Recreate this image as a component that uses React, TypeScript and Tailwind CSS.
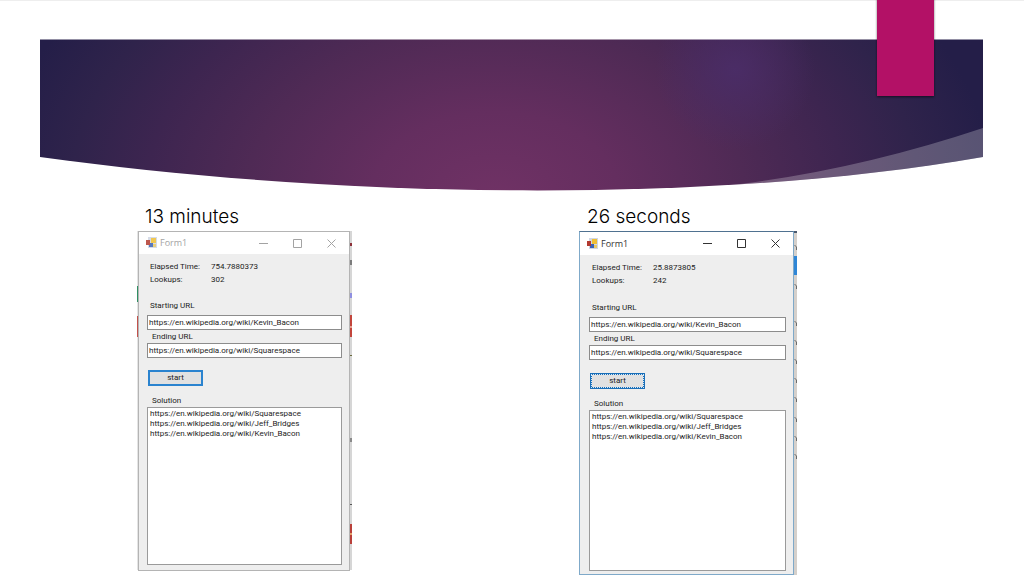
type Run = {
  id: string;
  title: string;
  active: boolean;
  elapsed: string;
  lookups: string;
  styles: {
    figure: string;
    frame: string;
    titleBar: string;
    client: string;
    startGap: string;
    buttonGap: string;
    button: string;
    solution: string;
  };
};

const START_URL = "https://en.wikipedia.org/wiki/Kevin_Bacon";
const END_URL = "https://en.wikipedia.org/wiki/Squarespace";
const SOLUTION = [END_URL, "https://en.wikipedia.org/wiki/Jeff_Bridges", START_URL].join("\n");

const runs: Run[] = [
  {
    id: "slow",
    title: "13 minutes",
    active: false,
    elapsed: "754.7880373",
    lookups: "302",
    styles: {
      figure: "w-[215px]",
      frame: "border-[#b4b4b4]",
      titleBar: "h-[22px] text-[#a3a3a3]",
      client: "pl-2 pb-[5px]",
      startGap: "mt-[13px]",
      buttonGap: "mt-3",
      button: "border-[#2a83cf]",
      solution: "h-[158px]",
    },
  },
  {
    id: "fast",
    title: "26 seconds",
    active: true,
    elapsed: "25.8873805",
    lookups: "242",
    styles: {
      figure: "w-[218px]",
      frame: "border-[#7fa9c9] border-t-[#4f7190]",
      titleBar: "h-[23px] text-[#333333]",
      client: "pl-[9px] pb-[3px]",
      startGap: "mt-[14px]",
      buttonGap: "mt-[13px]",
      button: "border-[#1a6fb8] outline-1 -outline-offset-2 outline-dotted outline-[#dce9f5]",
      solution: "h-[161px]",
    },
  },
];

function Banner() {
  return (
    <svg className="block w-full h-[191px]" viewBox="0 0 1024 191" preserveAspectRatio="none" aria-hidden="true">
      <defs>
        <radialGradient id="sky" gradientUnits="userSpaceOnUse" cx="0" cy="0" r="1" gradientTransform="translate(495 200) scale(500 350)">
          <stop offset="0" stopColor="#703265" />
          <stop offset="0.25" stopColor="#642e5f" />
          <stop offset="0.5" stopColor="#4f2a55" />
          <stop offset="0.7" stopColor="#3d2550" />
          <stop offset="0.85" stopColor="#2f234b" />
          <stop offset="1" stopColor="#241e48" />
        </radialGradient>
        <radialGradient id="glow" gradientUnits="userSpaceOnUse" cx="735" cy="70" r="80">
          <stop offset="0" stopColor="#4b2d68" stopOpacity="0.9" />
          <stop offset="1" stopColor="#4b2d68" stopOpacity="0" />
        </radialGradient>
        <clipPath id="swoosh">
          <path d="M40 39H983V157C720 203 350 200 40 157Z" />
        </clipPath>
        <filter id="drop" x="-20%" y="-10%" width="140%" height="130%" colorInterpolationFilters="sRGB">
          <feDropShadow dx="0" dy="1" stdDeviation="1.2" floodOpacity="0.55" />
        </filter>
      </defs>
      <rect width="1024" height="1" fill="#eeeeee" />
      <g clipPath="url(#swoosh)">
        <rect x="40" y="39" width="943" height="152" fill="url(#sky)" />
        <rect x="650" y="39" width="170" height="115" fill="url(#glow)" />
        <path d="M740 184Q860 169 983 128V191H740Z" fill="#ffffff" fillOpacity="0.24" />
        <rect x="40" y="39" width="943" height="1" fill="#ffffff" fillOpacity="0.5" />
      </g>
      <rect x="877" y="-4" width="57" height="100" fill="#b31166" filter="url(#drop)" />
    </svg>
  );
}

function FormIcon({ faded }: { faded: boolean }) {
  return (
    <svg className={`w-3 h-3 shrink-0 ${faded ? "opacity-85" : ""}`} viewBox="0 0 12 12" aria-hidden="true">
      <rect x="3" y="0" width="9" height="11" fill="#cfd6e4" />
      <rect x="6" y="1" width="5" height="5" fill="#efbf35" />
      <rect x="4" y="6" width="4" height="4" fill="#3b62b5" />
      <rect x="8" y="7" width="3" height="3" fill="#e8c765" />
      <rect x="1" y="3" width="4" height="5" fill="#b23a30" />
    </svg>
  );
}

function TitleBar({ run }: { run: Run }) {
  return (
    <div className={`flex items-center bg-white pl-[6px] pr-px ${run.styles.titleBar}`}>
      <FormIcon faded={!run.active} />
      <span className="ml-[3px] flex-1 text-[9px] leading-3 font-['Open_Sans',sans-serif]">Form1</span>
      <button type="button" aria-label="Minimize" className="flex w-[34px] h-full items-center justify-center">
        <svg width="9" height="9" stroke="currentColor" fill="none">
          <path d="M0 4.5H9" />
        </svg>
      </button>
      <button type="button" aria-label="Maximize" className="flex w-[34px] h-full items-center justify-center">
        <svg width="9" height="9" stroke="currentColor" fill="none">
          <path d="M.5 .5H8.5V8.5H.5Z" />
        </svg>
      </button>
      <button type="button" aria-label="Close" className="flex w-[34px] h-full items-center justify-center">
        <svg width="9" height="9" stroke="currentColor" fill="none">
          <path d="M.5 .5L8.5 8.5M8.5 .5L.5 8.5" />
        </svg>
      </button>
    </div>
  );
}

// slivers of the desktop that show on either side of each form
function LeftEdge({ run }: { run: Run }) {
  if (run.active) return null;
  return (
    <svg className="w-px h-[339px] shrink-0" aria-hidden="true">
      <rect y="0" width="1" height="339" fill="#e4e4e4" />
      <rect y="55" width="1" height="16" fill="#2f8f63" />
      <rect y="85" width="1" height="21" fill="#c2514b" />
    </svg>
  );
}

function RightEdge({ run }: { run: Run }) {
  if (!run.active) {
    return (
      <svg className="w-[2px] h-[339px] shrink-0" aria-hidden="true">
        <rect width="2" height="339" fill="#d6d6d6" />
        <rect y="12" width="2" height="3" fill="#8c3038" />
        <rect y="29" width="2" height="5" fill="#7c7c7c" />
        <rect y="62" width="2" height="5" fill="#8f8fe0" />
        <rect y="84" width="2" height="22" fill="#c2453c" />
        <rect y="95" width="2" height="2" fill="#e8a08f" />
        <rect y="124" width="2" height="1" fill="#6a6a3a" />
        <rect y="207" width="2" height="4" fill="#8a8a8a" />
        <rect y="273" width="2" height="1" fill="#555555" />
        <rect y="293" width="2" height="20" fill="#b9403a" />
        <rect y="302" width="2" height="2" fill="#e5a06a" />
      </svg>
    );
  }
  return (
    <svg className="w-[3px] h-[344px] shrink-0" aria-hidden="true">
      <rect width="3" height="344" fill="#d5d0cb" />
      <rect width="3" height="2" fill="#4a5a70" />
      <rect y="25" width="3" height="19" fill="#2f86d6" />
      {[14, 53, 90, 109, 128, 147, 166, 186, 205, 223].map((y) => (
        <path key={y} d={`M.5 ${y}l2 2v3`} stroke="#6b6b6b" fill="none" />
      ))}
    </svg>
  );
}

function FormWindow({ run }: { run: Run }) {
  const { styles } = run;
  const field = "block w-full h-[15px] border border-[#8c8c8c] bg-white px-px text-[8px] leading-[13px] outline-none";

  return (
    <div className={`flex-1 min-w-0 border bg-[#eeeeee] text-[8px] leading-[13px] text-[#1c1c1c] font-['Roboto',sans-serif] ${styles.frame}`}>
      <TitleBar run={run} />
      <form className={`pt-[6px] pr-[7px] ${styles.client}`} onSubmit={(e) => e.preventDefault()}>
        <dl className="grid grid-cols-[61px_1fr] pl-[3px]">
          <dt>Elapsed Time:</dt>
          <dd>{run.elapsed}</dd>
          <dt>Lookups:</dt>
          <dd>{run.lookups}</dd>
        </dl>
        <label htmlFor={`${run.id}-from`} className={`block pl-[3px] ${styles.startGap}`}>
          Starting URL
        </label>
        <input id={`${run.id}-from`} type="text" defaultValue={START_URL} className={`${field} mt-[3px]`} />
        <label htmlFor={`${run.id}-to`} className="block pl-[5px]">
          Ending URL
        </label>
        <input id={`${run.id}-to`} type="text" defaultValue={END_URL} className={field} />
        <button
          type="submit"
          className={`ml-px block w-[55px] h-4 border-2 bg-[#e1e1e1] text-center leading-3 ${styles.buttonGap} ${styles.button}`}
        >
          start
        </button>
        <label htmlFor={`${run.id}-solution`} className="mt-2 block pl-[5px]">
          Solution
        </label>
        <textarea
          id={`${run.id}-solution`}
          readOnly
          value={SOLUTION}
          className={`block w-full resize-none overflow-hidden border border-[#9a9a9a] bg-white px-[2px] pt-px leading-[10px] outline-none ${styles.solution}`}
        />
      </form>
    </div>
  );
}

export default function App() {
  return (
    <div className="bg-white">
      <Banner />
      <main className="flex items-start justify-between pt-3 pl-[137px] pr-[227px]">
        {runs.map((run) => (
          <section key={run.id} className={run.styles.figure}>
            <h2 className="h-7 pl-2 text-[19px] leading-7 font-light text-black font-['Inter',sans-serif] whitespace-nowrap">
              {run.title}
            </h2>
            <div className="flex items-start">
              <LeftEdge run={run} />
              <FormWindow run={run} />
              <RightEdge run={run} />
            </div>
          </section>
        ))}
      </main>
    </div>
  );
}
